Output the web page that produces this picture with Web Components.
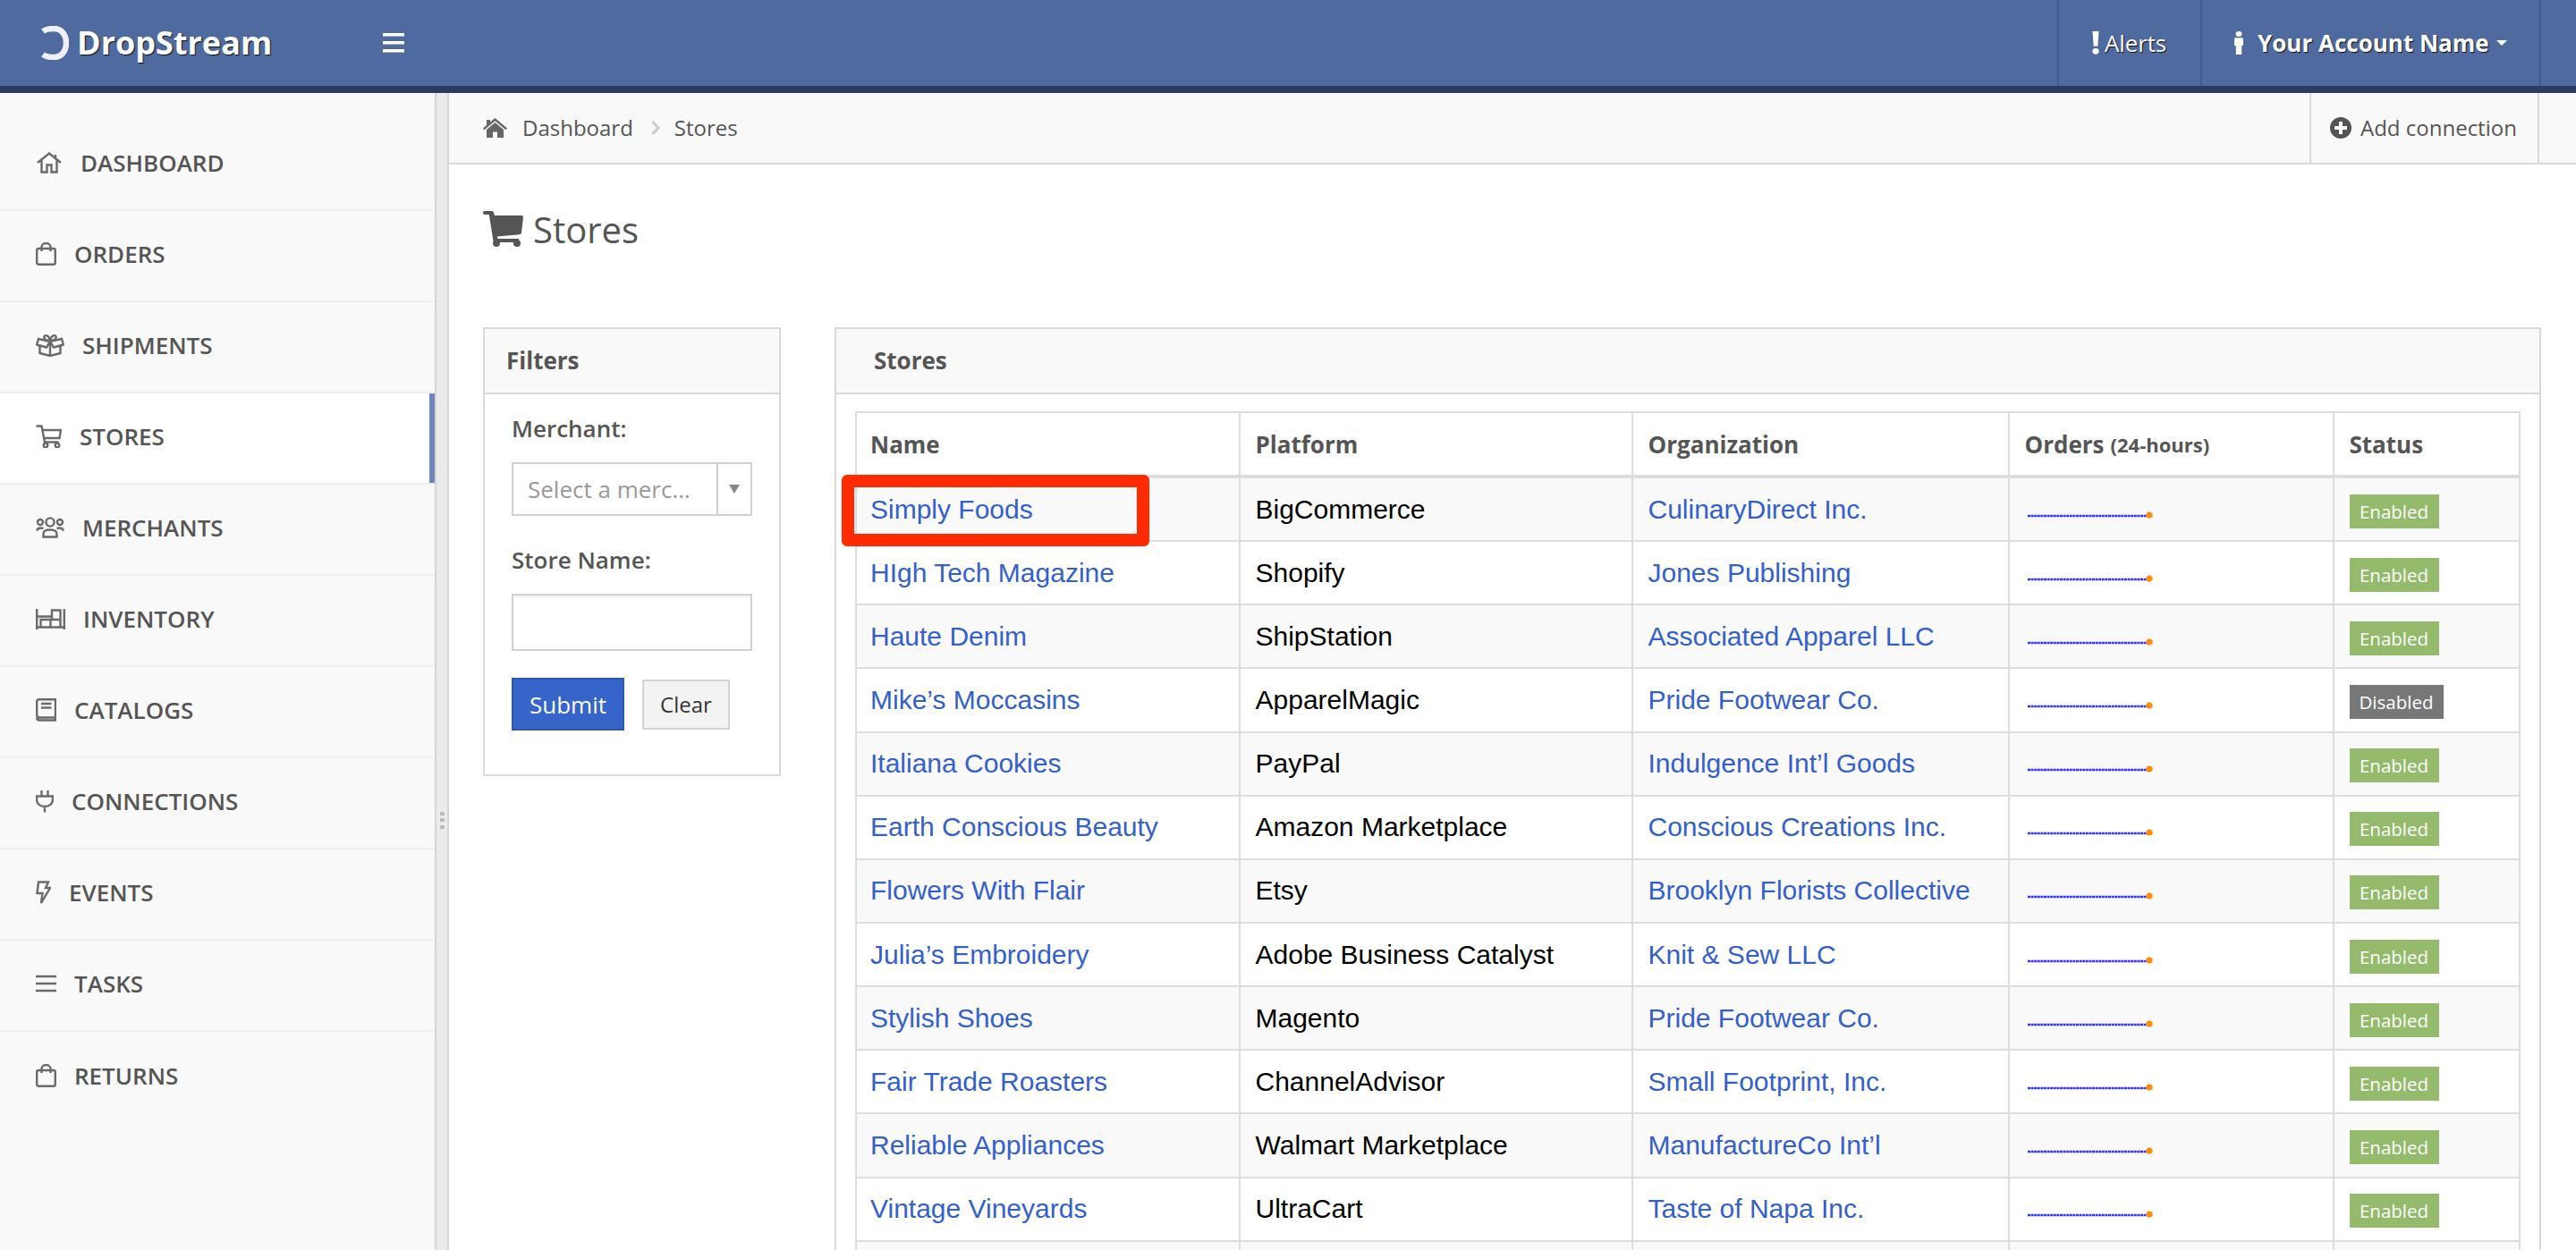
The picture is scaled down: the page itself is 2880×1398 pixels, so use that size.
<!DOCTYPE html>
<html>
<head>
<meta charset="utf-8">
<title>Stores</title>
<style>
  html, body { margin: 0; height: 100%; overflow: hidden; background: #fff; }
  body { font-family: 'Open Sans', 'Liberation Sans', sans-serif; color: #555; }
</style>
</head>
<body>
<app-shell>
  <app-header slot="header"></app-header>
  <side-nav slot="nav">
    <nav-item icon="home">DASHBOARD</nav-item>
    <nav-item icon="bag">ORDERS</nav-item>
    <nav-item icon="gift">SHIPMENTS</nav-item>
    <nav-item icon="cart" active>STORES</nav-item>
    <nav-item icon="people">MERCHANTS</nav-item>
    <nav-item icon="shelves">INVENTORY</nav-item>
    <nav-item icon="book">CATALOGS</nav-item>
    <nav-item icon="plug">CONNECTIONS</nav-item>
    <nav-item icon="bolt">EVENTS</nav-item>
    <nav-item icon="lines">TASKS</nav-item>
    <nav-item icon="bag">RETURNS</nav-item>
  </side-nav>
  <stores-page slot="main"></stores-page>
</app-shell>

<script>
// Outline icons of the side menu, all drawn on their real pixel size
const NAV_ICONS = {
  home: [30, 24, '<path d="M2 12 15 1.5 28 12M6.5 9.5V22.5H12.5V14.5H17.5V22.5H23.5V9.5M22 3V6.5"/>'],
  bag: [23, 26, '<rect x="1.2" y="7" width="20.6" height="17.8" rx="2"/><path d="M6.5 10V5.5a5 4.5 0 0 1 10 0V10"/>'],
  gift: [32, 26, '<path d="M16 9 3 6 1.2 12.5 4.5 14V22L16 25 27.5 22V14L30.8 12.5 29 6ZM16 9 12 15.5 1.2 12.5M16 9 20 15.5 30.8 12.5M16 9V25M16 8C12 8 8.5 6.5 9.5 3.5 10.5 .5 15 2.5 16 8 17 2.5 21.5 .5 22.5 3.5 23.5 6.5 20 8 16 8Z"/>'],
  cart: [29, 26, '<path d="M.5 1.5H6.5L10 19.5H25.5M7.5 6H28L26.5 15H9"/><circle cx="11" cy="23" r="2.3"/><circle cx="24" cy="23" r="2.3"/>'],
  people: [32, 24, '<circle cx="16" cy="6" r="4.6"/><circle cx="5" cy="6" r="3"/><circle cx="27" cy="6" r="3"/><path d="M8.5 22.5V19.5C8.5 15.5 11 14.5 16 14.5S23.5 15.5 23.5 19.5V22.5ZM1 15.5C2 13 5 12 8.5 13M31 15.5C30 13 27 12 23.5 13"/>'],
  shelves: [33, 24, '<path d="M1.2 1V24M31.8 1V24M1.2 21.5H31.8M5.5 21.5V13H27.5V21.5M16.5 13V21.5M18 13V2.5H27.5V13M1.2 9.5H18"/>'],
  book: [23, 26, '<path d="M22 21.5H4C2 21.5 1.2 20 1.2 18.5V3.5C1.2 2 2 1.2 3.5 1.2H22V24.5H4C2 24.5 1.2 23 1.2 21.5M6 6H17.5M6 10.5H17.5"/>'],
  plug: [20, 26, '<path d="M6.5 1V7M13.5 1V7M1 7.5H19V11C19 16 15 19 10 19S1 16 1 11ZM10 19V25.5"/>'],
  bolt: [17, 26, '<path d="M3 1.5H14L11 8H16L6 25 7.5 14H1.5Z"/>'],
  lines: [23, 20, '<path d="M0 2H23M0 10H23M0 18H23"/>'],
};

class AppShell extends HTMLElement {
  constructor() {
    super();
    this.attachShadow({ mode: 'open' }).innerHTML = `
      <style>
        :host { display: grid; height: 1398px; grid-template-rows: 104px 1fr; grid-template-columns: 486px 16px 1fr; }
        .head { grid-column: 1 / -1; }
        .gutter {
          display: flex; align-items: flex-start; justify-content: center; padding-top: 804px;
          background: #ebebeb; border-left: 2px solid #d5d5d5; border-right: 2px solid #d5d5d5;
        }
        .grip { width: 5px; height: 19px; background: repeating-linear-gradient(#bbb 0 4px, transparent 4px 7.5px); }
        .main { min-width: 0; overflow: hidden; }
      </style>
      <div class="head"><slot name="header"></slot></div>
      <slot name="nav"></slot>
      <div class="gutter"><div class="grip"></div></div>
      <div class="main"><slot name="main"></slot></div>`;
  }
}

class AppHeader extends HTMLElement {
  constructor() {
    super();
    this.attachShadow({ mode: 'open' }).innerHTML = `
      <style>
        :host {
          display: flex; box-sizing: border-box; height: 104px; align-items: stretch;
          background: #4f6a9f; border-bottom: 8px solid #2c3a5c; color: #fff;
          text-shadow: 1px 1px 1px rgba(0, 0, 0, .85);
        }
        .brand { display: flex; align-items: center; gap: 9px; padding-left: 45px; width: 428px; box-sizing: border-box; }
        .brand svg { filter: blur(.6px); }
        .brand b { font-size: 36px; font-weight: 700; line-height: 1; }
        .burger { align-self: center; flex: none; }
        .spacer { flex: 1; }
        .cell { display: flex; align-items: center; border-left: 2px solid #445c8c; font-size: 26px; }
        .alerts { width: 160px; box-sizing: border-box; padding-left: 37px; gap: 6px; letter-spacing: -.15px; }
        .account { width: 379px; box-sizing: border-box; padding-left: 36px; gap: 16px; font-weight: 700; }
        .caret { width: 0; height: 0; border: 6px solid transparent; border-top: 6px solid #fff; border-bottom: 0; margin-left: -8px; }
        .tail { width: 39px; border-left: 2px solid #445c8c; }
      </style>
      <div class="brand">
        <svg width="32" height="38" viewBox="0 0 32 38" fill="none" stroke="#fff" stroke-width="6.5">
          <path d="M3 6C7 3 11 3 15 3 24 3 29 10 29 19S24 35 15 35C11 35 7 35 3 32" stroke-opacity=".9"/>
        </svg>
        <b>DropStream</b>
      </div>
      <svg class="burger" width="24" height="22" viewBox="0 0 24 22" fill="#fff"><path d="M0 0H24V3.5H0ZM0 9H24V12.5H0ZM0 18H24V21.5H0Z"/></svg>
      <div class="spacer"></div>
      <div class="cell alerts">
        <svg width="8" height="26" viewBox="0 0 8 28" preserveAspectRatio="none" fill="#fff"><path d="M.5 0H7.5L6.3 18H1.7Z"/><circle cx="4" cy="24" r="3.6"/></svg>
        <span>Alerts</span>
      </div>
      <div class="cell account">
        <svg width="10" height="26" viewBox="0 0 10 31" preserveAspectRatio="none" fill="#fff"><circle cx="5" cy="3.5" r="3.4"/><path d="M1.5 8.5H8.5Q10 8.5 10 10V19H8.2V31H1.8V19H0V10Q0 8.5 1.5 8.5Z"/></svg>
        <span>Your Account Name</span>
        <i class="caret"></i>
      </div>
      <div class="tail"></div>`;
  }
}

class SideNav extends HTMLElement {
  constructor() {
    super();
    this.attachShadow({ mode: 'open' }).innerHTML = `
      <style>:host { display: block; background: #f9f9f9; padding-top: 30px; }</style>
      <slot></slot>`;
  }
}

class NavItem extends HTMLElement {
  constructor() {
    super();
    const [w, h, body] = NAV_ICONS[this.getAttribute('icon')];
    this.attachShadow({ mode: 'open' }).innerHTML = `
      <style>
        :host {
          display: flex; box-sizing: border-box; height: 102px; align-items: center; gap: 20px;
          padding: 0 0 4px 40px; border-bottom: 2px solid #eee;
          font-size: 26px; font-weight: 600; color: #555;
        }
        :host(:last-child) { border-bottom: 0; }
        :host([active]) { background: #fff; box-shadow: inset -6px 0 0 #6f86bb; }
        svg { flex: none; fill: none; stroke: #6a6a6a; stroke-width: 2.4; }
      </style>
      <svg width="${w}" height="${h}" viewBox="0 0 ${w} ${h}">${body}</svg>
      <slot></slot>`;
  }
}

class BreadCrumb extends HTMLElement {
  constructor() {
    super();
    this.attachShadow({ mode: 'open' }).innerHTML = `
      <style>
        :host {
          display: flex; box-sizing: border-box; height: 80px; align-items: center;
          padding: 0 0 0 38px; background: #f9f9f9; border-bottom: 2px solid #d9d9d9; font-size: 24px; color: #555;
        }
        span { position: relative; top: -1px; }
        .home { margin-right: 17px; flex: none; }
        .sep { margin: 0 16px 0 20px; flex: none; }
        .spacer { flex: 1; }
        .action {
          display: flex; align-items: center; gap: 10px; align-self: stretch; box-sizing: border-box;
          width: 257px; padding-left: 21px; margin-right: 41px;
          border-left: 2px solid #d9d9d9; border-right: 2px solid #d9d9d9;
        }
      </style>
      <svg class="home" width="27" height="22" viewBox="0 0 27 22" fill="#666">
        <path d="M13.5 0 27 11.5 25.5 13.3 13.5 3.2 1.5 13.3 0 11.5 4 8V2H8V4.6ZM13.5 5 23 13V22H16V15.5H11V22H4V13Z"/>
      </svg>
      <span>Dashboard</span>
      <svg class="sep" width="10" height="16" viewBox="0 0 10 16" fill="none" stroke="#ccc" stroke-width="3"><path d="M1.5 1 8 8 1.5 15"/></svg>
      <span>Stores</span>
      <div class="spacer"></div>
      <div class="action">
        <svg width="24" height="24" viewBox="0 0 24 24"><circle cx="12" cy="12" r="12" fill="#555"/><path d="M10 5H14V10H19V14H14V19H10V14H5V10H10Z" fill="#f9f9f9"/></svg>
        <span>Add connection</span>
      </div>`;
  }
}

class PagePanel extends HTMLElement {
  constructor() {
    super();
    this.attachShadow({ mode: 'open' }).innerHTML = `
      <style>
        :host { display: block; box-sizing: border-box; border: 2px solid #d9d9d9; background: #fff; }
        .head {
          box-sizing: border-box; height: 73px; display: flex; align-items: center;
          background: #f9f9f9; border-bottom: 2px solid #d9d9d9; padding-bottom: 2px;
          padding-left: var(--panel-head-pad, 24px); font-size: 26px; font-weight: 700; color: #555;
        }
      </style>
      <div class="head"><slot name="title"></slot></div>
      <slot></slot>`;
  }
}

class FilterForm extends HTMLElement {
  constructor() {
    super();
    this.attachShadow({ mode: 'open' }).innerHTML = `
      <style>
        :host { display: flex; flex-direction: column; box-sizing: border-box; padding: 20px 30px 0 30px; height: 425px; }
        label { font-size: 26px; font-weight: 600; color: #555; line-height: 36px; }
        .select {
          display: flex; box-sizing: border-box; height: 60px; margin: 20px 0 31px; width: 269px;
          border: 2px solid #d0d0d0; color: #999; font-size: 26px; align-items: stretch;
        }
        .select span { flex: 1; padding-left: 16px; line-height: 56px; white-space: nowrap; }
        .arrow { width: 36px; border-left: 2px solid #d0d0d0; display: flex; align-items: center; justify-content: center; }
        .arrow i { width: 0; height: 0; border: 6px solid transparent; border-top: 10px solid #888; border-bottom: 0; }
        .input { box-sizing: border-box; width: 269px; height: 64px; margin-top: 20px; border: 2px solid #d0d0d0; box-shadow: inset 0 2px 2px #eee; }
        .buttons { display: flex; align-items: center; gap: 20px; margin-top: 30px; }
        .btn { box-sizing: border-box; display: flex; align-items: center; justify-content: center; font-size: 26px; }
        .submit { width: 126px; height: 59px; background: #3565c8; border: 2px solid #2f58ad; color: #fff; }
        .clear { width: 98px; height: 56px; background: #f3f3f3; border: 2px solid #d4d4d4; color: #333; font-size: 24px; }
      </style>
      <label>Merchant:</label>
      <div class="select"><span>Select a merc...</span><div class="arrow"><i></i></div></div>
      <label>Store Name:</label>
      <div class="input"></div>
      <div class="buttons">
        <div class="btn submit">Submit</div>
        <div class="btn clear">Clear</div>
      </div>`;
  }
}

class SparkLine extends HTMLElement {
  constructor() {
    super();
    this.attachShadow({ mode: 'open' }).innerHTML = `
      <style>
        :host { display: block; width: 142px; height: 12px; margin: 12px 0 0 3px; }
        svg { display: block; }
      </style>
      <svg width="142" height="12" viewBox="0 0 142 12">
        <path d="M0 7H136" stroke="#3333ff" stroke-width="2.6" stroke-dasharray="3 .6" fill="none"/>
        <circle cx="136" cy="6" r="3.6" fill="#ff8c00"/>
      </svg>`;
  }
}

class StatusBadge extends HTMLElement {
  constructor() {
    super();
    const off = this.textContent.trim() === 'Disabled';
    this.attachShadow({ mode: 'open' }).innerHTML = `
      <style>
        :host {
          display: inline-flex; box-sizing: border-box; height: 38px; width: ${off ? 105 : 100}px;
          align-items: center; justify-content: center; margin-top: 4px;
          background: ${off ? '#777' : '#94bb6b'}; color: #fff; font-size: 20.5px;
        }
      </style>
      <slot></slot>`;
  }
}

class StoreRow extends HTMLElement {
  constructor() {
    super();
    const status = this.getAttribute('status');
    this.attachShadow({ mode: 'open' }).innerHTML = `
      <style>
        :host {
          display: grid; grid-template-columns: var(--store-cols); box-sizing: border-box; height: 71.15px;
          border-bottom: 2px solid #ddd; font-family: 'Liberation Sans', Arial, sans-serif; font-size: 30px; color: #000;
        }
        :host(:nth-of-type(odd)) { background: #f9f9f9; }
        .c { display: flex; align-items: center; padding-left: 16.5px; border-right: 2px solid #ddd; white-space: nowrap; min-width: 0; }
        .c:first-of-type { padding-left: 15px; }
        .c:last-child { border-right: 0; }
        status-badge { font-family: 'Open Sans', sans-serif; }
        a { color: #3360c9; text-decoration: none; }
      </style>
      <div class="c"><a>${this.getAttribute('name') || ''}</a></div>
      <div class="c">${this.getAttribute('platform') || ''}</div>
      <div class="c"><a>${this.getAttribute('org') || ''}</a></div>
      <div class="c">${status ? '<spark-line></spark-line>' : ''}</div>
      <div class="c">${status ? `<status-badge>${status}</status-badge>` : ''}</div>`;
  }
}

class StoreTable extends HTMLElement {
  constructor() {
    super();
    this.attachShadow({ mode: 'open' }).innerHTML = `
      <style>
        :host {
          --store-cols: 429px 439px 421px 363px 1fr;
          display: block; position: relative; border: 2px solid #ddd; border-bottom: 0; box-sizing: border-box;
        }
        .head {
          display: grid; grid-template-columns: var(--store-cols); box-sizing: border-box; height: 73px;
          border-bottom: 4px solid #ddd; font-size: 26px; font-weight: 700; color: #555;
        }
        .head div { display: flex; align-items: center; gap: 7px; padding-left: 16.5px; border-right: 2px solid #ddd; }
        .head div:first-child { padding-left: 15px; }
        .head div:last-child { border-right: 0; }
        small { font-size: 22px; }
        /* the red call-out that lies over the first row */
        .callout {
          position: absolute; left: -17px; top: 69px; width: 344px; height: 80px; box-sizing: border-box;
          border: 14px solid #ff2a00; border-radius: 6px; pointer-events: none;
        }
      </style>
      <div class="head">
        <div>Name</div><div>Platform</div><div>Organization</div>
        <div>Orders <small>(24-hours)</small></div><div>Status</div>
      </div>
      <slot></slot>
      <div class="callout"></div>`;
  }
}

class StoresPage extends HTMLElement {
  constructor() {
    super();
    const rows = [
      ['Simply Foods', 'BigCommerce', 'CulinaryDirect Inc.', 'Enabled'],
      ['HIgh Tech Magazine', 'Shopify', 'Jones Publishing', 'Enabled'],
      ['Haute Denim', 'ShipStation', 'Associated Apparel LLC', 'Enabled'],
      ['Mike’s Moccasins', 'ApparelMagic', 'Pride Footwear Co.', 'Disabled'],
      ['Italiana Cookies', 'PayPal', 'Indulgence Int’l Goods', 'Enabled'],
      ['Earth Conscious Beauty', 'Amazon Marketplace', 'Conscious Creations Inc.', 'Enabled'],
      ['Flowers With Flair', 'Etsy', 'Brooklyn Florists Collective', 'Enabled'],
      ['Julia’s Embroidery', 'Adobe Business Catalyst', 'Knit & Sew LLC', 'Enabled'],
      ['Stylish Shoes', 'Magento', 'Pride Footwear Co.', 'Enabled'],
      ['Fair Trade Roasters', 'ChannelAdvisor', 'Small Footprint, Inc.', 'Enabled'],
      ['Reliable Appliances', 'Walmart Marketplace', 'ManufactureCo Int’l', 'Enabled'],
      ['Vintage Vineyards', 'UltraCart', 'Taste of Napa Inc.', 'Enabled'],
      ['', '', '', ''],
    ];
    this.attachShadow({ mode: 'open' }).innerHTML = `
      <style>
        :host { display: block; height: 100%; overflow: hidden; }
        h1 {
          display: flex; align-items: center; gap: 11px; margin: 0; height: 182px; box-sizing: border-box;
          padding: 0 0 38px 38px; font-size: 40px; font-weight: 400; color: #555;
        }
        .cols { display: grid; grid-template-columns: 333px 1fr; gap: 60px; padding: 0 39px 0 38px; align-items: start; }
        .wrap { padding: 19px 21px 0; }
        .stores { height: 1100px; --panel-head-pad: 42px; }
      </style>
      <bread-crumb></bread-crumb>
      <h1>
        <svg width="45" height="40" viewBox="0 0 45 40" fill="#555">
          <path d="M2 0H10Q11.5 0 12 1.5L12.8 5H43Q45 5 45 7L43 24Q42.8 26 41 26.2L15.8 28.5 16.5 31H40V35H13.5Q12 35 11.5 33.5L6.8 4H2Q0 4 0 2T2 0Z"/>
          <circle cx="15" cy="36" r="4"/><circle cx="38" cy="36" r="4"/>
        </svg>
        <span>Stores</span>
      </h1>
      <div class="cols">
        <page-panel><span slot="title">Filters</span><filter-form></filter-form></page-panel>
        <page-panel class="stores">
          <span slot="title">Stores</span>
          <div class="wrap">
            <store-table>
              ${rows.map(([n, p, o, s]) => `<store-row name="${n}" platform="${p}" org="${o.replace('&', '&amp;')}" status="${s}"></store-row>`).join('')}
            </store-table>
          </div>
        </page-panel>
      </div>`;
  }
}

// children first, so that a shadow root can use them as soon as it is parsed
customElements.define('spark-line', SparkLine);
customElements.define('status-badge', StatusBadge);
customElements.define('store-row', StoreRow);
customElements.define('store-table', StoreTable);
customElements.define('filter-form', FilterForm);
customElements.define('page-panel', PagePanel);
customElements.define('bread-crumb', BreadCrumb);
customElements.define('stores-page', StoresPage);
customElements.define('nav-item', NavItem);
customElements.define('side-nav', SideNav);
customElements.define('app-header', AppHeader);
customElements.define('app-shell', AppShell);
</script>
</body>
</html>
